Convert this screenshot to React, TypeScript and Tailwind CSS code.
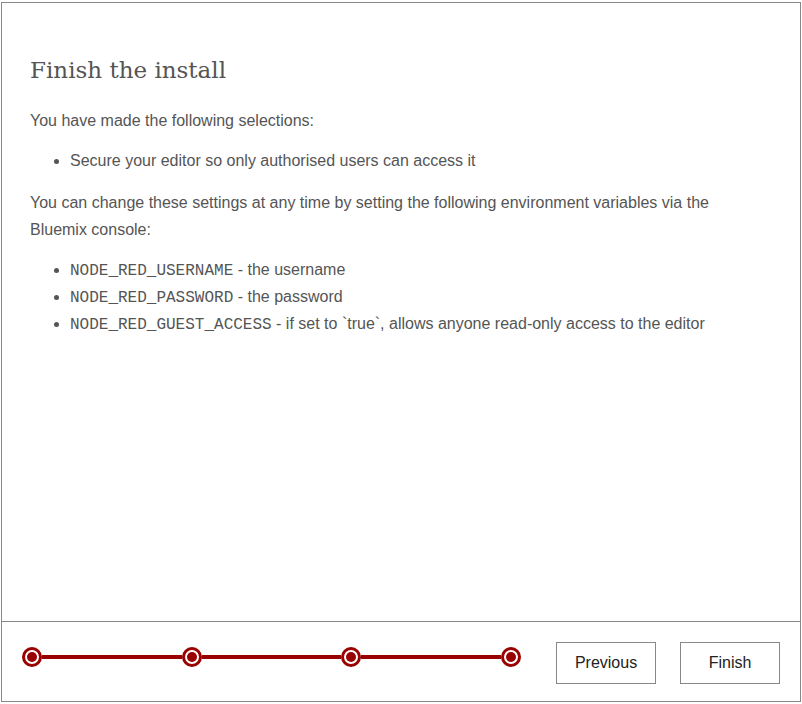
import React from "react";

function Step() {
  return (
    <div className="w-[20px] h-[20px] rounded-full border-[3px] border-[#990000] bg-white flex items-center justify-center shrink-0">
      <div className="w-[10px] h-[10px] rounded-full bg-[#990000]" />
    </div>
  );
}

const mono = { fontFamily: '"Liberation Mono", "Courier New", monospace' };

export default function App() {
  const sans = { fontFamily: '"Liberation Sans", Arial, sans-serif' };
  return (
    <div className="w-[802px] h-[704px] bg-white pt-[2px] pl-[1px]">
      <div
        className="w-[800px] h-[700px] border border-[#888] flex flex-col"
        style={sans}
      >
        <div className="flex-1 pl-[28px] pr-[40px] pt-[53px] text-[#555] text-[16px] leading-[27px]">
          <h1
            className="text-[23px] leading-[28px] font-normal text-[#555]"
            style={{ fontFamily: '"DejaVu Serif", serif' }}
          >
            Finish the install
          </h1>
          <p className="mt-[23px]">You have made the following selections:</p>
          <ul className="mt-[13px] pl-[40px] list-disc">
            <li>Secure your editor so only authorised users can access it</li>
          </ul>
          <p className="mt-[15px]">
            You can change these settings at any time by setting the following
            environment variables via the Bluemix console:
          </p>
          <ul className="mt-[13px] pl-[40px] list-disc">
            <li>
              <code className="leading-none" style={mono}>
                NODE_RED_USERNAME
              </code>{" "}
              - the username
            </li>
            <li>
              <code className="leading-none" style={mono}>
                NODE_RED_PASSWORD
              </code>{" "}
              - the password
            </li>
            <li>
              <code className="leading-none" style={mono}>
                NODE_RED_GUEST_ACCESS
              </code>{" "}
              - if set to `true`, allows anyone read-only access to the editor
            </li>
          </ul>
        </div>
        <div className="h-[80px] border-t border-[#888] flex items-start">
          <div className="ml-[20px] mt-[25px] w-[499px] flex items-center">
            <Step />
            <div className="flex-1 h-[4px] bg-[#990000]" />
            <Step />
            <div className="flex-1 h-[4px] bg-[#990000]" />
            <Step />
            <div className="flex-1 h-[4px] bg-[#990000]" />
            <Step />
          </div>
          <div className="ml-auto mr-[20px] mt-[20px] flex gap-[24px]">
            <button className="w-[100px] h-[42px] border border-[#888] bg-white text-[#222] text-[16px]">
              Previous
            </button>
            <button className="w-[100px] h-[42px] border border-[#888] bg-white text-[#222] text-[16px]">
              Finish
            </button>
          </div>
        </div>
      </div>
    </div>
  );
}
